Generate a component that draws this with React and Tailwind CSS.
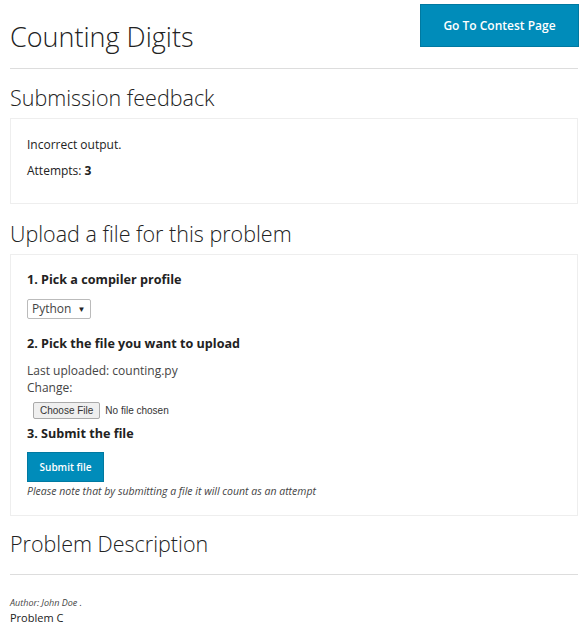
import React from "react";

function Step({ children, className = "" }) {
  return <h4 className={`text-[12.6px] font-bold leading-[18px] text-[#222] ${className}`}>{children}</h4>;
}

export default function App() {
  return (
    <div className="min-h-[634px] bg-white px-[10px] text-[#222] font-['Open_Sans',sans-serif]">
      <div className="flex items-start justify-between">
        <h1 className="mt-[19px] text-[27px] font-light leading-[36px] text-[#222]">Counting Digits</h1>
        <button className="mt-[4px] mr-[-1px] h-[43px] w-[159px] border border-[#0079a1] bg-[#008cba] text-[12px] font-semibold text-white">
          Go To Contest Page
        </button>
      </div>
      <hr className="mt-[13px] border-t border-[#ddd]" />

      <h2 className="mt-[15px] text-[21.5px] font-light leading-[28px] text-[#222]">Submission feedback</h2>
      <div className="mt-[6px] h-[86px] border border-[#eee] px-[16px] pt-[17px] text-[12px] leading-[17px]">
        <p>Incorrect output.</p>
        <p className="mt-[9px]">
          Attempts: <b>3</b>
        </p>
      </div>

      <h2 className="mt-[16px] text-[21.5px] font-light leading-[28px] text-[#222]">Upload a file for this problem</h2>
      <div className="mt-[6px] h-[262px] border border-[#eee] px-[16px] pt-[16px]">
        <Step>1. Pick a compiler profile</Step>
        <div className="mt-[10px] inline-flex h-[20px] items-center gap-[6px] rounded-[2px] border border-[#bbb] bg-white pl-[4px] pr-[5px] text-[12px] text-[#444]">
          Python <span className="text-[8px] text-[#222]">▼</span>
        </div>
        <Step className="mt-[16px]">2. Pick the file you want to upload</Step>
        <p className="mt-[9px] text-[12px] leading-[17px] text-[#444]">Last uploaded: counting.py</p>
        <p className="text-[12px] leading-[17px] text-[#444]">Change:</p>
        <div className="mt-[6px] ml-[6px] flex items-center gap-[5px] font-['Liberation_Sans',Arial,sans-serif] text-[10px] text-[#333]">
          <span className="flex h-[17px] items-center rounded-[2px] border border-[#aaa] bg-[#efefef] px-[6px]">Choose File</span>
          <span>No file chosen</span>
        </div>
        <Step className="mt-[6px]">3. Submit the file</Step>
        <button className="mt-[9px] h-[30px] w-[77px] border border-[#0079a1] bg-[#008cba] text-[10px] font-semibold text-white">
          Submit file
        </button>
        <p className="mt-[2px] text-[10.5px] italic leading-[14px] text-[#444]">
          Please note that by submitting a file it will count as an attempt
        </p>
      </div>

      <h2 className="mt-[14px] text-[21.5px] font-light leading-[28px] text-[#222]">Problem Description</h2>
      <hr className="mt-[16px] border-t border-[#ddd]" />
      <p className="mt-[21px] text-[9px] italic leading-[13px] text-[#444]">Author: John Doe .</p>
      <p className="mt-[1px] text-[11px] leading-[16px] text-[#222]">Problem C</p>
    </div>
  );
}
